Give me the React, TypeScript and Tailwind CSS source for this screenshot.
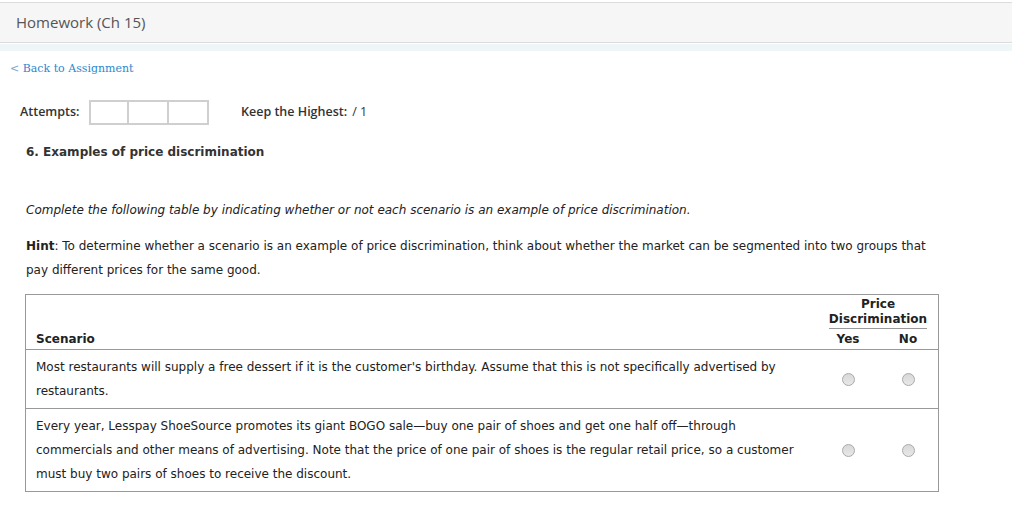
import React from "react";

const Radio = () => (
  <span className="inline-block w-[13px] h-[13px] rounded-full border border-[#a9a9a9] bg-gradient-to-b from-[#d8d8d8] to-[#e8e8e8]" />
);

const RadioPair = () => (
  <div className="w-[120px] flex">
    <span className="w-[60px] flex justify-center"><Radio /></span>
    <span className="w-[60px] flex justify-center"><Radio /></span>
  </div>
);

export default function App() {
  return (
    <div className="w-[1012px] h-[513px] bg-white overflow-hidden text-[#333] font-['DejaVu_Sans',Verdana,sans-serif]">
      <div className="h-[2px] bg-white" />
      <div className="h-[41px] bg-[#f6f6f6] border-t border-b border-[#dcdcdc] flex items-center px-[16px]">
        <span className="text-[15px] text-[#555] font-['Open_Sans',sans-serif]">Homework (Ch 15)</span>
      </div>
      <div className="h-[1px] bg-white" />
      <div className="h-[7px] bg-[#eff6f7]" />
      <div className="pl-[10px] pt-[4px] h-[26px]">
        <a className="text-[11px] text-[#2a88cf] font-['DejaVu_Serif',Georgia,serif]">
          <span className="text-[#7aa9cc]">&lt;</span> Back to Assignment
        </a>
      </div>
      <div className="flex items-center mt-[23px] pl-[20px] h-[25px] font-['Open_Sans',sans-serif]">
        <span className="text-[12.5px] font-semibold text-[#333] w-[69px]">Attempts:</span>
        <div className="flex">
          <div className="w-[40px] h-[25px] border-2 border-[#cfcfcf]" />
          <div className="w-[40px] h-[25px] border-2 border-l-0 border-[#cfcfcf]" />
          <div className="w-[40px] h-[25px] border-2 border-l-0 border-[#cfcfcf]" />
        </div>
        <span className="ml-[32px] text-[12.5px] font-semibold text-[#333]">Keep the Highest:</span>
        <span className="ml-[5px] text-[12.5px] text-[#333]">/ 1</span>
      </div>
      <div className="pl-[26px] pr-[70px]">
        <div className="mt-[18px] text-[12px] font-bold text-[#333] leading-[18px]">6. Examples of price discrimination</div>
        <div className="mt-[37px] text-[12px] italic leading-[24px] text-[#222]">
          Complete the following table by indicating whether or not each scenario is an example of price discrimination.
        </div>
        <div className="mt-[12px] text-[12px] leading-[24px] text-[#222]">
          <b>Hint</b>: To determine whether a scenario is an example of price discrimination, think about whether the market can be segmented into two groups that pay different prices for the same good.
        </div>
      </div>
      <div className="ml-[25px] mt-[12px] w-[914px] border border-[#999] text-[12px] text-[#222]">
        <div className="flex border-b border-[#999] h-[55px]">
          <div className="flex-1 flex items-end pl-[10px] pb-[1px] font-bold">Scenario</div>
          <div className="w-[120px] flex flex-col items-center pt-[2px] font-bold leading-[15px]">
            <span>Price</span>
            <span className="border-b border-[#999] pb-[1px]">Discrimination</span>
            <div className="flex w-full mt-[3px]">
              <span className="w-[60px] text-center">Yes</span>
              <span className="w-[60px] text-center">No</span>
            </div>
          </div>
        </div>
        <div className="flex border-b border-[#999] items-center">
          <div className="flex-1 pl-[10px] pr-[20px] py-[5px] leading-[24px]">
            Most restaurants will supply a free dessert if it is the customer's birthday. Assume that this is not specifically advertised by restaurants.
          </div>
          <RadioPair />
        </div>
        <div className="flex items-center">
          <div className="flex-1 pl-[10px] pr-[20px] py-[5px] leading-[24px]">
            Every year, Lesspay ShoeSource promotes its giant BOGO sale—buy one pair of shoes and get one half off—through commercials and other means of advertising. Note that the price of one pair of shoes is the regular retail price, so a customer must buy two pairs of shoes to receive the discount.
          </div>
          <RadioPair />
        </div>
      </div>
    </div>
  );
}
